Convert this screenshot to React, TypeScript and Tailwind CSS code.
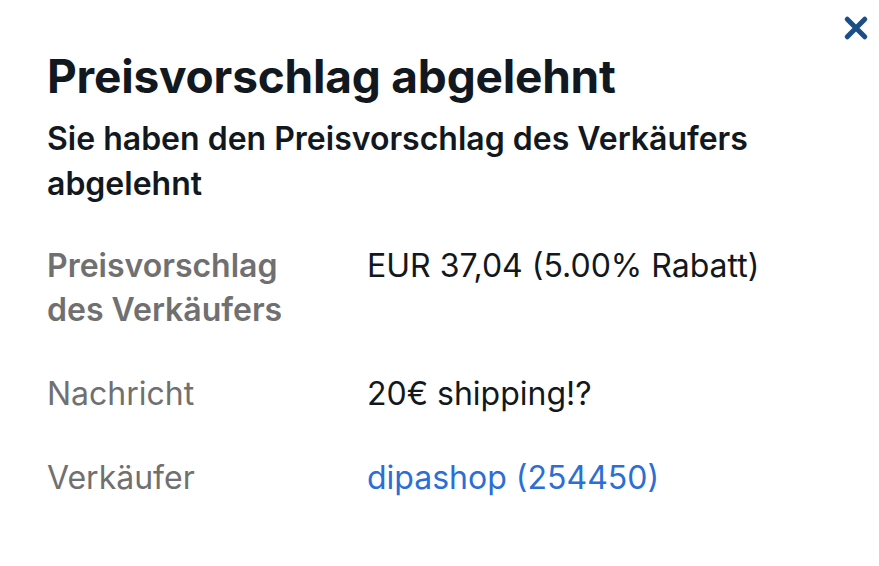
import React from "react";

export default function App() {
  return (
    <div
      className="relative w-[879px] h-[566px] bg-white overflow-hidden"
      style={{ fontFamily: "Inter, 'Noto Sans', sans-serif" }}
    >
      <button className="absolute right-[6px] top-[11px] w-[34px] h-[34px] flex items-center justify-center">
        <svg width="30" height="30" viewBox="0 0 24 24" fill="none">
          <path d="M5 5L19 19M19 5L5 19" stroke="#1b4d87" strokeWidth="4" strokeLinecap="round" />
        </svg>
      </button>
      <div className="pl-[47px] pt-[48px] pr-[20px]">
        <h1 className="text-[46px] leading-[56px] font-bold text-[#111820] tracking-[-0.2px]">
          Preisvorschlag abgelehnt
        </h1>
        <p className="mt-[12px] text-[32px] leading-[45px] font-semibold text-[#111820] w-[780px]">
          Sie haben den Preisvorschlag des Verkäufers abgelehnt
        </p>
        <div className="mt-[38px] flex flex-col gap-[40px] text-[32px] leading-[44px]">
          <div className="flex">
            <div className="w-[320px] font-semibold text-[#707070]">
              Preisvorschlag
              <br />
              des Verkäufers
            </div>
            <div className="text-[#111820]">EUR 37,04 (5.00% Rabatt)</div>
          </div>
          <div className="flex">
            <div className="w-[320px] text-[#707070]">Nachricht</div>
            <div className="text-[#111820]">20€ shipping!?</div>
          </div>
          <div className="flex">
            <div className="w-[320px] text-[#707070]">Verkäufer</div>
            <div className="text-[#2b6fd6]">dipashop (254450)</div>
          </div>
        </div>
      </div>
    </div>
  );
}
